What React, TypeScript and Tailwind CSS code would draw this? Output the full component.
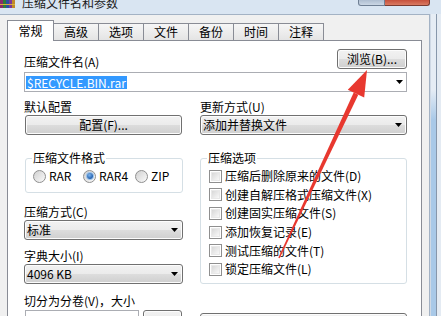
import React from "react";

const Arrow = () => (
  <svg width="7" height="4" viewBox="0 0 7 4" className="shrink-0">
    <polygon points="0,0 7,0 3.5,4" fill="#000" />
  </svg>
);

const Btn = ({ children, className = "" }: { children?: React.ReactNode; className?: string }) => (
  <div
    className={
      "h-[20px] flex items-center justify-center rounded-[3px] border border-[#707070] bg-[linear-gradient(to_bottom,#f2f2f2_0%,#ebebeb_50%,#dddddd_50%,#cfcfcf_100%)] shadow-[inset_0_0_0_1px_#fcfcfc] " +
      className
    }
  >
    {children}
  </div>
);

const Combo = ({ text, className = "" }: { text: string; className?: string }) => (
  <div
    className={
      "h-[20px] flex items-center justify-between pl-[2px] pr-[4px] rounded-[3px] border border-[#707070] bg-[linear-gradient(to_bottom,#f2f2f2_0%,#ebebeb_50%,#dddddd_50%,#cfcfcf_100%)] shadow-[inset_0_0_0_1px_#fcfcfc] " +
      className
    }
  >
    <span>{text}</span>
    <Arrow />
  </div>
);

const Radio = ({ label, checked, w }: { label: string; checked?: boolean; w: string }) => (
  <div className={"flex items-center gap-[3px] " + w}>
    <div className="w-[13px] h-[13px] rounded-full border border-[#8f8f8f] bg-[linear-gradient(135deg,#d0d0d0,#fafafa)] flex items-center justify-center">
      {checked && (
        <div className="w-[6px] h-[6px] rounded-full bg-[radial-gradient(circle_at_40%_35%,#7fb6ef,#1f5fae_70%)] shadow-[0_0_0_1px_#9cc3ea]" />
      )}
    </div>
    <span className="leading-[14px]">{label}</span>
  </div>
);

const Check = ({ label }: { label: string }) => (
  <div className="h-[18.6px] flex items-center gap-[3px]">
    <div className="w-[13px] h-[13px] border border-[#8f8f8f] bg-white p-[1px] shrink-0">
      <div className="w-full h-full bg-[linear-gradient(135deg,#d8d8d8,#f8f8f8)] border border-[#e8e8e8]" />
    </div>
    <span className="leading-[14px]">{label}</span>
  </div>
);

const Tab = ({ label }: { label: string }) => (
  <div className="w-[46px] h-[17px] -ml-px flex items-center justify-center border border-b-0 border-[#898c95] bg-[linear-gradient(to_bottom,#f6f6f6,#e4e4e4)]">
    {label}
  </div>
);

export default function App() {
  return (
    <div className="relative w-[441px] h-[316px] overflow-hidden bg-[#d9e5f2] text-[12px] leading-[14px] text-[#000] font-['Noto_Sans_CJK_SC',sans-serif]">
      {/* title bar */}
      <div className="h-[14px] flex items-start">
        <svg width="15" height="8" viewBox="0 0 15 8" className="shrink-0">
          <rect x="0" y="0" width="3" height="8" fill="#8a2a6a" />
          <rect x="3" y="0" width="3" height="8" fill="#2f7a3a" />
          <rect x="6" y="0" width="3" height="8" fill="#2b4fa0" />
          <rect x="9" y="0" width="3" height="8" fill="#7a3a9a" />
          <rect x="12" y="0" width="3" height="8" fill="#c08a2a" />
          <rect x="0" y="4" width="15" height="1" fill="#d8b040" />
        </svg>
        <div className="ml-[7px] -mt-[3px] text-[12px] leading-[12px] text-[#1a1a1a]">压缩文件名和参数</div>
        <div className="flex-1" />
        <div className="w-[27px] h-[6px] border border-t-0 border-[#6f7f94] rounded-bl-[3px] bg-[linear-gradient(to_bottom,#aebdd0,#cbd7e5)]" />
        <div className="w-[45px] h-[6px] border border-t-0 border-l-0 border-[#7a3a30] rounded-br-[3px] bg-[linear-gradient(to_bottom,#c6503b,#d97a62)]" />
        <div className="w-[11px]" />
      </div>

      <div className="flex h-[302px]">
        {/* body */}
        <div className="w-[430px] h-full flex flex-col bg-[#f0f0f0] border-t border-r border-[#a3b2c4] pl-[7px] pr-[7px] pt-[5px]">
          {/* tabs */}
          <div className="flex items-end h-[20px] pl-px">
            <div className="relative z-10 w-[47px] h-[21px] -ml-px -mb-px flex items-center justify-center border border-b-0 border-[#898c95] bg-white">
              常规
            </div>
            <Tab label="高级" />
            <Tab label="选项" />
            <Tab label="文件" />
            <Tab label="备份" />
            <Tab label="时间" />
            <Tab label="注释" />
          </div>
          {/* panel */}
          <div className="flex-1 border border-b-0 border-[#898c95] bg-white pl-[16px] pr-[14px] pt-[8px] overflow-hidden">
            <div className="h-[20px] flex items-end justify-between">
              <span className="leading-[14px]">压缩文件名(A)</span>
              <Btn className="w-[70px]">浏览(B)...</Btn>
            </div>
            <div className="mt-[3px] h-[20px] flex items-center justify-between border border-[#abadb3] bg-white pl-px pr-[3px]">
              <span className="bg-[#3399ff] text-white leading-[13px] px-px">$RECYCLE.BIN.rar</span>
              <Arrow />
            </div>
            <div className="mt-[8px] flex justify-between">
              {/* left column */}
              <div className="w-[159px] flex flex-col">
                <span>默认配置</span>
                <Btn className="mt-[1px] mx-[1px]">配置(F)...</Btn>
                <fieldset className="mt-[16px] ml-px border border-[#d5dfe5] rounded-[3px] pt-[4px] pb-[9px]">
                  <legend className="ml-[6px] px-[1px] leading-[14px]">压缩文件格式</legend>
                  <div className="flex items-center pl-[7px] h-[14px]">
                    <Radio label="RAR" w="w-[50px]" />
                    <Radio label="RAR4" w="w-[52px]" checked />
                    <Radio label="ZIP" w="w-[40px]" />
                  </div>
                </fieldset>
                <span className="mt-[12px]">压缩方式(C)</span>
                <Combo text="标准" className="mt-[1px]" />
                <span className="mt-[9px]">字典大小(I)</span>
                <Combo text="4096 KB" className="mt-[1px]" />
                <span className="mt-[10px]">切分为分卷(V)，大小</span>
                <div className="mt-[2px] flex gap-[4px] pl-px">
                  <div className="w-[114px] h-[20px] border border-[#abadb3] bg-white" />
                  <Btn className="w-[39px]" />
                </div>
              </div>
              {/* right column */}
              <div className="w-[207px] flex flex-col">
                <span>更新方式(U)</span>
                <Combo text="添加并替换文件" className="mt-[1px]" />
                <fieldset className="mt-[16px] border border-[#d5dfe5] rounded-[3px] pt-[2px] pb-[4px]">
                  <legend className="ml-[6px] px-[1px] leading-[14px]">压缩选项</legend>
                  <div className="flex flex-col pl-[8px]">
                    <Check label="压缩后删除原来的文件(D)" />
                    <Check label="创建自解压格式压缩文件(X)" />
                    <Check label="创建固实压缩文件(S)" />
                    <Check label="添加恢复记录(E)" />
                    <Check label="测试压缩的文件(T)" />
                    <Check label="锁定压缩文件(L)" />
                  </div>
                </fieldset>
                <Btn className="mt-[29px]" />
              </div>
            </div>
          </div>
        </div>
        {/* right frame */}
        <div className="w-[11px] h-full flex">
          <div className="w-[1px] bg-[#cfd9e5]" />
          <div className="w-[5px] bg-[linear-gradient(to_bottom,#e6edf5_0%,#e6edf5_25%,#a9c9e8_35%,#a9c9e8_100%)]" />
          <div className="w-[1px] bg-[#8797ab]" />
          <div className="w-[4px] bg-[#e4ebf3]" />
        </div>
      </div>

      {/* red annotation arrow */}
      <svg className="absolute left-0 top-0 pointer-events-none" width="441" height="316" viewBox="0 0 441 316">
        <polygon points="279.7,258.3 278.3,257.7 353.7,92.5 358.3,94.7" fill="#e8382f" />
        <polygon points="367,70 364.2,97.4 347.8,89.8" fill="#e8382f" />
      </svg>
    </div>
  );
}
